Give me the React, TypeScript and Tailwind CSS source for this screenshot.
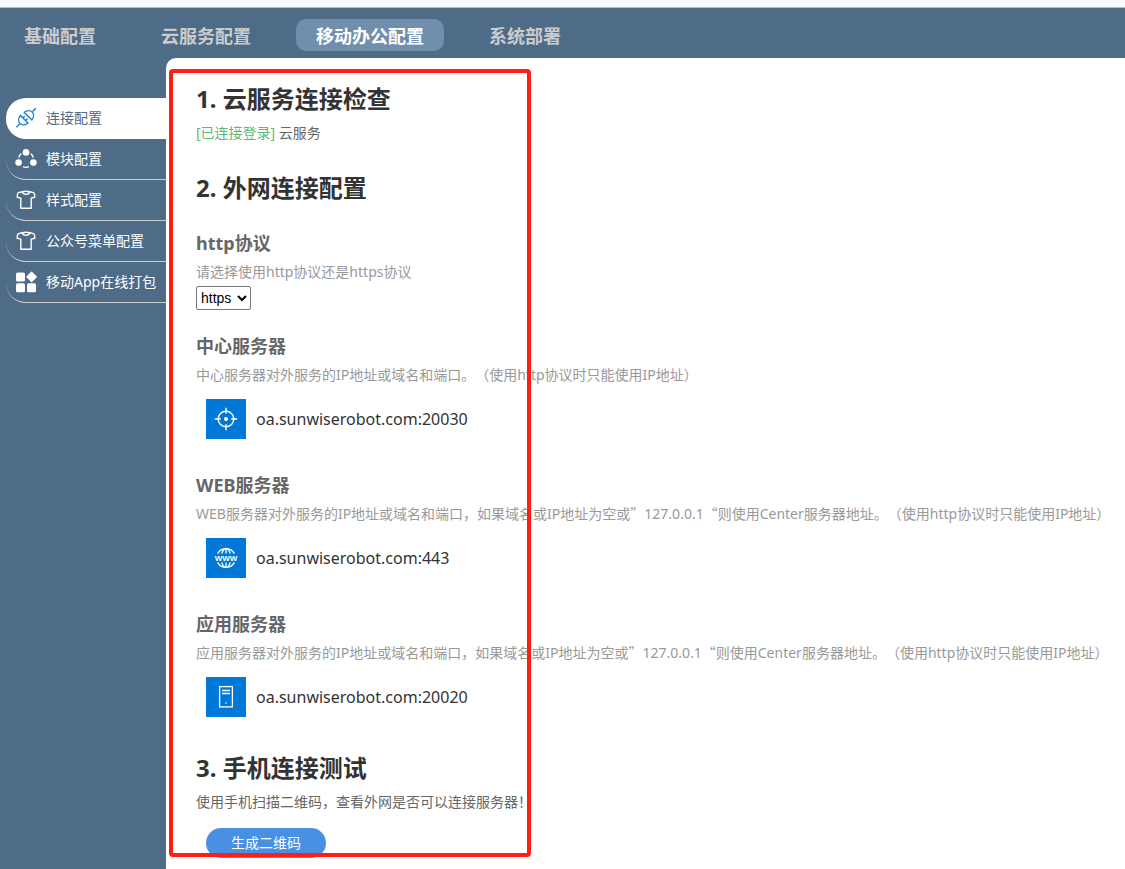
import { useState } from "react";
import type { ReactNode } from "react";

const tabs = ["基础配置", "云服务配置", "移动办公配置", "系统部署"];

const PlugIcon = () => (
	<svg
		viewBox="0 0 22 22"
		className="size-[22px] text-[#2f86c9]"
		fill="none"
		stroke="currentColor"
		strokeWidth="1.5"
		strokeLinejoin="round"
	>
		<path d="M5.4 8.4 13 16A5.400 6.600 45 0 1 5.400 8.400Z" />
		<path d="M16.800 13 9.200 5.400A5.400 6.600 45 0 1 16.800 13Z" />
		<path d="M4.500 17l-3.200 3.200M17.600 4.500l3.100-3.100M7.900 10.900l1.900-1.900M10.500 13.500l1.900-1.900" />
	</svg>
);

const ModuleIcon = () => (
	<svg viewBox="0 0 22 22" className="size-[22px]" fill="currentColor">
		<circle cx="11" cy="4.4" r="3.3" />
		<circle cx="3.6" cy="14.6" r="3.3" />
		<circle cx="18.4" cy="14.6" r="3.3" />
		<path
			d="M6.4 5.6C4.8 6.5 4 7.9 3.9 9.6M15.6 5.6c1.6.9 2.4 2.3 2.5 4M8 18.6c2 1 4 1 6 0"
			fill="none"
			stroke="currentColor"
			strokeWidth="1.4"
		/>
	</svg>
);

const ShirtIcon = () => (
	<svg
		viewBox="0 0 22 22"
		className="size-[22px]"
		fill="none"
		stroke="currentColor"
		strokeWidth="1.4"
		strokeLinejoin="round"
	>
		<path d="M7.2 2.7 3.6 3.6Q2.6 4 2.5 5L2.2 8.2l3.6.9v10.2h10.4V9.1l3.6-.9-.3-3.2q-.1-1-1.1-1.4l-3.6-.9Q11 1.8 7.2 2.7Z" />
		<path d="M7.2 2.7q.6 2.7 3.8 2.7t3.8-2.7" />
	</svg>
);

const AppIcon = () => (
	<svg viewBox="0 0 22 22" className="size-[22px]" fill="currentColor">
		<rect x="1" y="1.5" width="9" height="9" rx="1.6" />
		<rect x="1" y="12.3" width="9" height="9" rx="1.6" />
		<rect x="12" y="12.3" width="9" height="9" rx="1.6" />
		<rect x="12.6" y="1.9" width="8" height="8" rx="1" transform="rotate(45 16.6 5.9)" />
	</svg>
);

const TargetIcon = () => (
	<svg viewBox="0 0 24 24" className="size-6" fill="none" stroke="currentColor" strokeWidth="1.4">
		<circle cx="12" cy="12" r="7.8" />
		<circle cx="12" cy="12" r="2" fill="currentColor" stroke="none" />
		<path d="M12 .8v6M12 17.2v6M.8 12h6M17.2 12h6" />
	</svg>
);

const WebIcon = () => (
	<svg viewBox="0 0 24 24" className="size-6" fill="none" stroke="currentColor" strokeWidth="1.3">
		<path d="M3.6 7.6a9.5 9.5 0 0 1 16.8 0M7.8 7.6C8.7 4.4 10.3 2.5 12 2.5s3.3 1.9 4.2 5.1M12 2.5v5.1" />
		<path d="M3.6 16.4a9.5 9.5 0 0 0 16.8 0M7.8 16.4c.9 3.2 2.5 5.1 4.2 5.1s3.3-1.9 4.2-5.1M12 21.5v-5.1" />
		<text
			x="12"
			y="15"
			textAnchor="middle"
			fill="currentColor"
			stroke="none"
			className="font-['Liberation_Sans',sans-serif] text-[8px] font-bold"
		>
			WWW
		</text>
	</svg>
);

const ServerIcon = () => (
	<svg viewBox="0 0 24 24" className="size-6" fill="none" stroke="currentColor" strokeWidth="1.3">
		<rect x="5.6" y="1.6" width="12.8" height="20.3" />
		<path d="M8 5.5h8M8 8.5h8" />
		<circle cx="12" cy="18" r=".8" fill="currentColor" stroke="none" />
	</svg>
);

const menu = [
	{ label: "连接配置", icon: <PlugIcon /> },
	{ label: "模块配置", icon: <ModuleIcon /> },
	{ label: "样式配置", icon: <ShirtIcon /> },
	{ label: "公众号菜单配置", icon: <ShirtIcon /> },
	{ label: "移动App在线打包", icon: <AppIcon /> },
];

// full-width quotes only exist in the CJK face
const Quote = ({ children }: { children: string }) => (
	<span className="font-['Noto_Sans_CJK_SC',sans-serif] leading-none">{children}</span>
);

const LocalHost = () => (
	<>
		<Quote>”</Quote>127.0.0.1<Quote>“</Quote>
	</>
);

type ServerProps = {
	title: string;
	address: string;
	icon: ReactNode;
	children: ReactNode;
};

function Server({ title, address, icon, children }: ServerProps) {
	return (
		<section>
			<h3 className="text-lg leading-6 font-bold">{title}</h3>
			<p className="mt-[7px] leading-5 text-[#999]">{children}</p>
			<div className="mt-3.5 ml-2.5 flex items-center gap-2.5 text-base text-[#333]">
				<span className="flex size-10 items-center justify-center bg-[#0078d7] text-white">
					{icon}
				</span>
				{address}
			</div>
		</section>
	);
}

export default function App() {
	const [tab, setTab] = useState(2);
	const [current, setCurrent] = useState(0);
	const [protocol, setProtocol] = useState("https");

	return (
		<div
			lang="zh-CN"
			className="flex min-h-screen flex-col bg-[#4e6b87] font-['Noto_Sans','Noto_Sans_CJK_SC',sans-serif] text-sm [text-spacing-trim:space-all]"
		>
			<div className="h-2 border-b border-[#b8bcc2] bg-[#fbfbfd]" />
			<nav className="flex gap-[25px] px-1 pt-[11px] pb-[7px]">
				{tabs.map((name, i) => (
					<button
						key={name}
						onClick={() => setTab(i)}
						className={
							i === tab
								? "h-8 rounded-[10px] bg-[#718fad] px-5 pt-0.5 text-lg leading-6 font-bold text-white"
								: "h-8 rounded-[10px] px-5 pt-0.5 text-lg leading-6 font-bold text-[#ccc]"
						}
					>
						{name}
					</button>
				))}
			</nav>
			<div className="flex flex-1">
				<aside className="w-[166px] shrink-0 pt-10 pl-1.5">
					{menu.map(({ label, icon }, i) => (
						<button
							key={label}
							onClick={() => setCurrent(i)}
							className={
								i === current
									? "flex h-[41px] w-full items-center gap-[9px] rounded-l-[20px] border-b border-white bg-white pl-[9px] whitespace-nowrap text-[#4e6b87]"
									: "flex h-[41px] w-full items-center gap-[9px] rounded-l-[20px] border-b border-[#ccc] pl-[9px] whitespace-nowrap text-white"
							}
						>
							{icon}
							{label}
						</button>
					))}
				</aside>
				<main className="relative min-w-0 flex-1 rounded-tl-[10px] bg-white pt-[25px] pb-2 pl-[30px] text-[#666]">
					<h2 className="text-2xl leading-8 font-bold text-[#333]">1. 云服务连接检查</h2>
					<p className="mt-2 leading-5">
						<span className="text-[#5fb878]">[已连接登录]</span> 云服务
					</p>

					<h2 className="mt-[29px] text-2xl leading-8 font-bold text-[#333]">2. 外网连接配置</h2>
					<div className="mt-[27px]">
						<h3 className="text-lg leading-6 font-bold">http协议</h3>
						<label htmlFor="protocol" className="mt-[7px] block leading-5 text-[#999]">
							请选择使用http协议还是https协议
						</label>
						<select
							id="protocol"
							value={protocol}
							onChange={(e) => setProtocol(e.target.value)}
							className="mt-1 block h-6 w-[55px] rounded-[2px] border border-[#767676] bg-white font-['Liberation_Sans',sans-serif] text-black"
						>
							<option>http</option>
							<option>https</option>
						</select>
					</div>
					<div className="mt-6 flex flex-col gap-[34px]">
						<Server title="中心服务器" address="oa.sunwiserobot.com:20030" icon={<TargetIcon />}>
							中心服务器对外服务的IP地址或域名和端口。（使用http协议时只能使用IP地址）
						</Server>
						<Server title="WEB服务器" address="oa.sunwiserobot.com:443" icon={<WebIcon />}>
							WEB服务器对外服务的IP地址或域名和端口，如果域名或IP地址为空或
							<LocalHost />
							则使用Center服务器地址。（使用http协议时只能使用IP地址）
						</Server>
						<Server title="应用服务器" address="oa.sunwiserobot.com:20020" icon={<ServerIcon />}>
							应用服务器对外服务的IP地址或域名和端口，如果域名或IP地址为空或
							<LocalHost />
							则使用Center服务器地址。（使用http协议时只能使用IP地址）
						</Server>
					</div>

					<h2 className="mt-[35px] text-2xl leading-8 font-bold text-[#333]">3. 手机连接测试</h2>
					<p className="mt-2 leading-5">使用手机扫描二维码，查看外网是否可以连接服务器！</p>
					<button className="mt-4 ml-2.5 block h-[30px] w-[120px] rounded-full bg-[#4a90e2] text-white">
						生成二维码
					</button>

					{/* highlight frame over the form */}
					<div className="pointer-events-none absolute top-[11px] bottom-3 left-[3px] w-[362px] rounded-[4px] border-4 border-[#ff1e14]" />
				</main>
			</div>
		</div>
	);
}
